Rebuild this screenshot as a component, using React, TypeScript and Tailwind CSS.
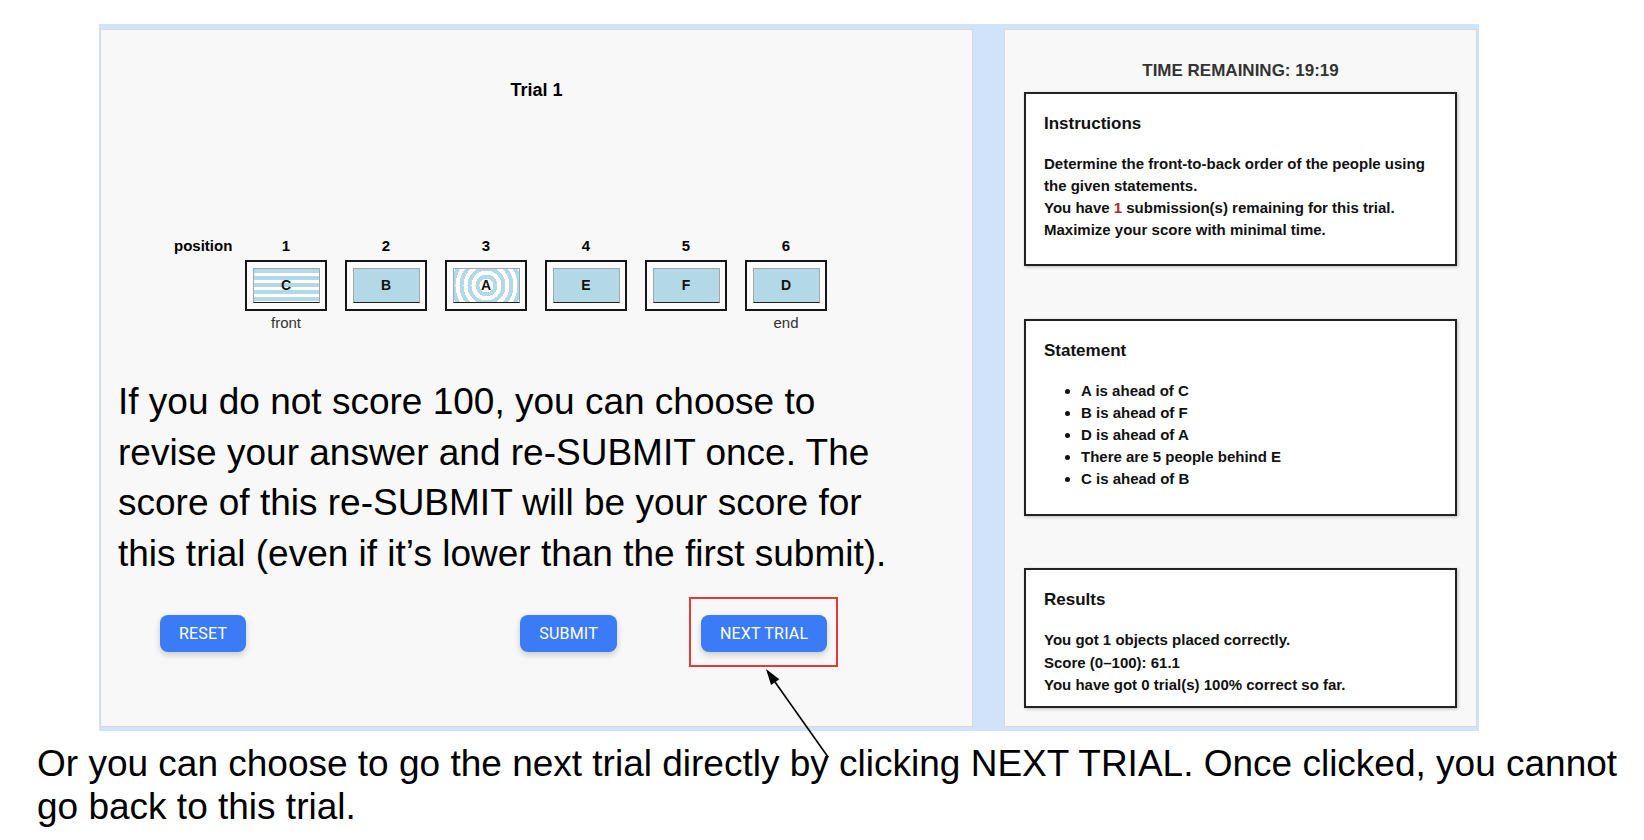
import React from 'react';

const slots = [
    { pos: 1, letter: 'C', fill: 'stripes', caption: 'front' },
    { pos: 2, letter: 'B', fill: 'plain', caption: '' },
    { pos: 3, letter: 'A', fill: 'rings', caption: '' },
    { pos: 4, letter: 'E', fill: 'plain', caption: '' },
    { pos: 5, letter: 'F', fill: 'plain', caption: '' },
    { pos: 6, letter: 'D', fill: 'plain', caption: 'end' },
];

const statements = [
    'A is ahead of C',
    'B is ahead of F',
    'D is ahead of A',
    'There are 5 people behind E',
    'C is ahead of B',
];

const fillClass: Record<string, string> = {
    plain: 'bg-[#b4d9e6]',
    stripes:
        'bg-[image:repeating-linear-gradient(to_bottom,#b4d9e6_0px,#b4d9e6_4px,#ffffff_4px,#ffffff_7px)]',
    rings:
        'bg-[image:radial-gradient(circle,#fff_0px_7px,#b4d9e6_7px_11px,#fff_11px_15px,#b4d9e6_15px_19px,#fff_19px_23px,#b4d9e6_23px_27px,#fff_27px_31px,#b4d9e6_31px_35px,#fff_35px_39px,#b4d9e6_39px_44px)]',
};

const Slot = ({ item }: { item: (typeof slots)[number] }) => (
    <div className="w-[82px] flex flex-col items-center">
        <div className="text-[15px] leading-[16px] font-bold">{item.pos}</div>
        <div className="mt-[6px] w-[82px] h-[51px] border-2 border-[#151515] bg-[#fbfbfb] flex items-center justify-center">
            <div
                className={`w-[67px] h-[35px] border border-[#a0a8ac] border-b-[#222] flex items-center justify-center ${fillClass[item.fill]}`}
            >
                <span className="text-[14px] font-bold text-[#111]">{item.letter}</span>
            </div>
        </div>
        <div className="mt-[4px] h-[16px] text-[15px] leading-[16px] text-[#333]">
            {item.caption}
        </div>
    </div>
);

const Box = ({
    title,
    height,
    className,
    children,
}: {
    title: string;
    height: string;
    className?: string;
    children: React.ReactNode;
}) => (
    <div
        className={`border-2 border-[#222] bg-white px-[18px] pt-[20px] shadow-[1px_1px_3px_rgba(0,0,0,0.25)] ${height} ${className ?? ''}`}
    >
        <h3 className="text-[17px] leading-[20px] font-bold text-[#111]">{title}</h3>
        <div className="mt-[19px] text-[15px] leading-[22px] font-bold text-[#111]">
            {children}
        </div>
    </div>
);

const Button = ({ label, className }: { label: string; className?: string }) => (
    <button
        className={`h-[37px] px-[19px] rounded-[8px] bg-[#3b7cf6] text-white text-[16px] tracking-[0.2px] font-['Roboto',sans-serif] shadow-[0_3px_6px_rgba(0,0,0,0.18)] ${className ?? ''}`}
    >
        {label}
    </button>
);

const App = () => {
    return (
        <div className="relative w-[1644px] h-[840px] bg-white text-black font-['Liberation_Sans',Arial,sans-serif]">
            <div className="pt-[24px] pl-[99px]">
                <div className="flex w-[1380px] bg-[#d1e3fa] pt-[5px] pb-[4px] pl-[1px] pr-[2px] gap-[31px]">
                    {/* task panel */}
                    <div className="w-[873px] h-[698px] bg-[#f8f8f8] border border-[#d9d9d9] pt-[50px]">
                        <h2 className="text-center text-[18px] leading-[20px] font-bold">Trial 1</h2>
                        <div className="mt-[138px] flex items-start pl-[73px]">
                            <div className="w-[71px] text-[15px] leading-[16px] font-bold">position</div>
                            <div className="flex gap-[18px]">
                                {slots.map((item) => (
                                    <Slot key={item.pos} item={item} />
                                ))}
                            </div>
                        </div>
                        <p className="mt-[46px] ml-[17px] w-[785px] text-[37px] leading-[50.6px]">
                            If you do not score 100, you can choose to revise your answer and
                            re-SUBMIT once. The score of this re-SUBMIT will be your score for
                            this trial (even if it’s lower than the first submit).
                        </p>
                        <div className="mt-[36px] flex pl-[59px]">
                            <Button label="RESET" />
                            <Button label="SUBMIT" className="ml-[274px]" />
                            <Button label="NEXT TRIAL" className="ml-[84px]" />
                        </div>
                    </div>

                    {/* side panel */}
                    <div className="w-[473px] h-[698px] bg-[#f8f8f8] border border-[#d9d9d9] pt-[31px] px-[19px]">
                        <div className="text-center text-[17px] leading-[20px] font-bold text-[#333]">
                            TIME REMAINING: 19:19
                        </div>
                        <Box title="Instructions" height="h-[174px]" className="mt-[11px]">
                            <p>Determine the front-to-back order of the people using the given statements.</p>
                            <p>
                                You have <span className="text-[#b3261e]">1</span> submission(s)
                                remaining for this trial.
                            </p>
                            <p>Maximize your score with minimal time.</p>
                        </Box>
                        <Box title="Statement" height="h-[197px]" className="mt-[53px]">
                            <ul className="list-disc pl-[37px]">
                                {statements.map((s) => (
                                    <li key={s}>{s}</li>
                                ))}
                            </ul>
                        </Box>
                        <Box title="Results" height="h-[140px]" className="mt-[52px]">
                            <div className="leading-[22.5px]">
                                <p>You got 1 objects placed correctly.</p>
                                <p>Score (0–100): 61.1</p>
                                <p>You have got 0 trial(s) 100% correct so far.</p>
                            </div>
                        </Box>
                    </div>
                </div>
            </div>

            <p className="pl-[37px] pt-[11px] pr-[10px] text-[37px] leading-[43px]">
                Or you can choose to go the next trial directly by clicking NEXT TRIAL. Once
                clicked, you cannot go back to this trial.
            </p>

            {/* annotation */}
            <div className="absolute left-[689px] top-[597px] w-[149px] h-[70px] border-2 border-[#e53935]" />
            <svg className="absolute left-0 top-0 pointer-events-none" width="1644" height="840">
                <line x1="775" y1="682" x2="828" y2="757" stroke="#000" strokeWidth="1.6" />
                <polygon points="766,669 771.1,685 779.3,679.2" fill="#000" />
            </svg>
        </div>
    );
};

export default App;
